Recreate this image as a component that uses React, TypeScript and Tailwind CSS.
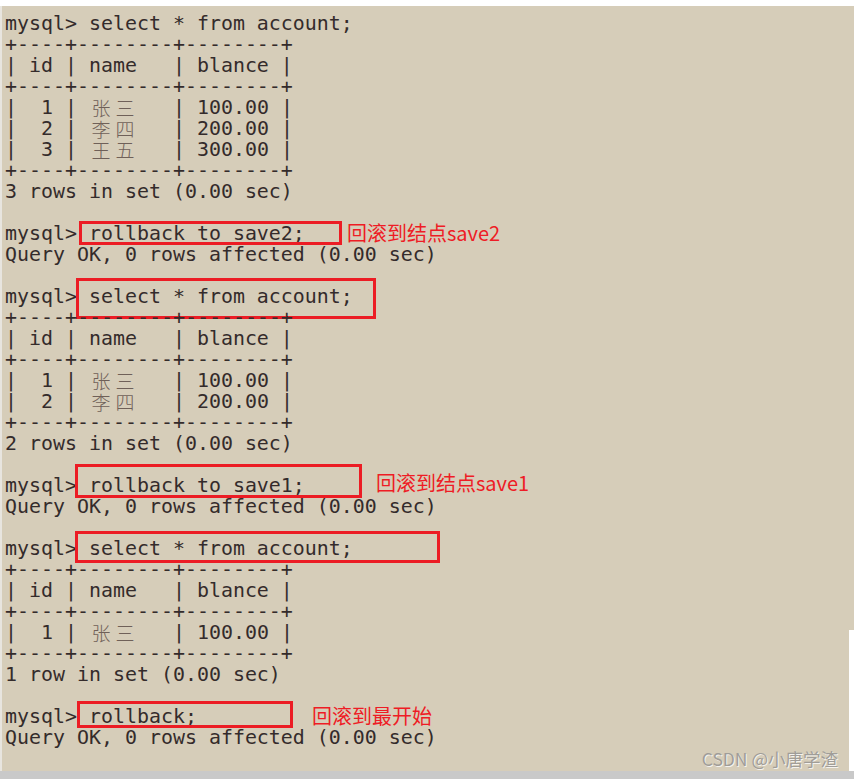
import React from "react";

type Box = { left: number; top: number; width: number; height: number };
type Label = { left: number; top: number; text: string };
type Line = { t: string; box?: Box; label?: Label };

const sep = "+----+--------+--------+";
const head = "| id | name   | blance |";

const lines: Line[] = [
  { t: "mysql> select * from account;" },
  { t: sep },
  { t: head },
  { t: sep },
  { t: "|  1 | 张三   | 100.00 |" },
  { t: "|  2 | 李四   | 200.00 |" },
  { t: "|  3 | 王五   | 300.00 |" },
  { t: sep },
  { t: "3 rows in set (0.00 sec)" },
  { t: "" },
  {
    t: "mysql> rollback to save2;",
    box: { left: 79, top: -2, width: 263, height: 24 },
    label: { left: 347, top: -1, text: "回滚到结点save2" },
  },
  { t: "Query OK, 0 rows affected (0.00 sec)" },
  { t: "" },
  { t: "mysql> select * from account;", box: { left: 76, top: -8, width: 300, height: 41 } },
  { t: sep },
  { t: head },
  { t: sep },
  { t: "|  1 | 张三   | 100.00 |" },
  { t: "|  2 | 李四   | 200.00 |" },
  { t: sep },
  { t: "2 rows in set (0.00 sec)" },
  { t: "" },
  {
    t: "mysql> rollback to save1;",
    box: { left: 75, top: -11, width: 287, height: 34 },
    label: { left: 376, top: -3, text: "回滚到结点save1" },
  },
  { t: "Query OK, 0 rows affected (0.00 sec)" },
  { t: "" },
  { t: "mysql> select * from account;", box: { left: 75, top: -7, width: 365, height: 32 } },
  { t: sep },
  { t: head },
  { t: sep },
  { t: "|  1 | 张三   | 100.00 |" },
  { t: sep },
  { t: "1 row in set (0.00 sec)" },
  { t: "" },
  {
    t: "mysql> rollback;",
    box: { left: 77, top: -5, width: 216, height: 27 },
    label: { left: 312, top: -1, text: "回滚到最开始" },
  },
  { t: "Query OK, 0 rows affected (0.00 sec)" },
  { t: "" },
  { t: "mysql> select * from account;" },
];

function renderText(t: string) {
  const parts: React.ReactNode[] = [];
  let buf = "";
  let k = 0;
  for (const ch of t) {
    if (/[\u4e00-\u9fff]/.test(ch)) {
      if (buf) {
        parts.push(<span key={k++}>{buf}</span>);
        buf = "";
      }
      parts.push(
        <span
          key={k++}
          className="inline-block w-[24px] h-[21px] text-center text-[19px] leading-[21px] text-[#6f6058] font-['Noto_Sans_CJK_SC',sans-serif] font-light align-top"
        >
          {ch}
        </span>
      );
    } else {
      buf += ch;
    }
  }
  if (buf) parts.push(<span key={k++}>{buf}</span>);
  return parts;
}

export default function App() {
  return (
    <div className="w-[854px] h-[779px] bg-white flex flex-col overflow-hidden">
      <div className="h-[6px] bg-white" />
      <div className="h-[765px] flex">
        <div className="flex-1 relative bg-[#d6cdb9] border-l-2 border-[#e8e5df] overflow-hidden pt-[7px] font-['DejaVu_Sans_Mono',monospace] text-[19.93px] leading-[21px] text-[#342b2b]">
          {lines.map((ln, i) => (
            <div key={i} className="relative h-[21px] pl-[3px] whitespace-pre">
              {renderText(ln.t)}
              {ln.box && (
                <div
                  className="absolute border-[3px] border-[#ec1c24]"
                  style={{ left: ln.box.left - 2, top: ln.box.top, width: ln.box.width, height: ln.box.height }}
                />
              )}
              {ln.label && (
                <div
                  className="absolute text-[20px] leading-[22px] text-[#ee1c25] font-['Noto_Sans_CJK_SC',sans-serif]"
                  style={{ left: ln.label.left - 2, top: ln.label.top }}
                >
                  {ln.label.text}
                </div>
              )}
            </div>
          ))}
          <div className="absolute right-[11px] bottom-[2px] text-[17.5px] leading-[20px] text-[#a09d98] font-['Noto_Sans_CJK_SC',sans-serif] [text-shadow:1px_1px_0_#f4f2ee]">
            CSDN @小唐学渣
          </div>
        </div>
        <div className="w-[5px] flex flex-col">
          <div className="h-[624px] bg-[#d6cdb9]" />
          <div className="flex-1 bg-white" />
        </div>
      </div>
      <div className="flex-1 bg-[#c9c9c9]" />
    </div>
  );
}
